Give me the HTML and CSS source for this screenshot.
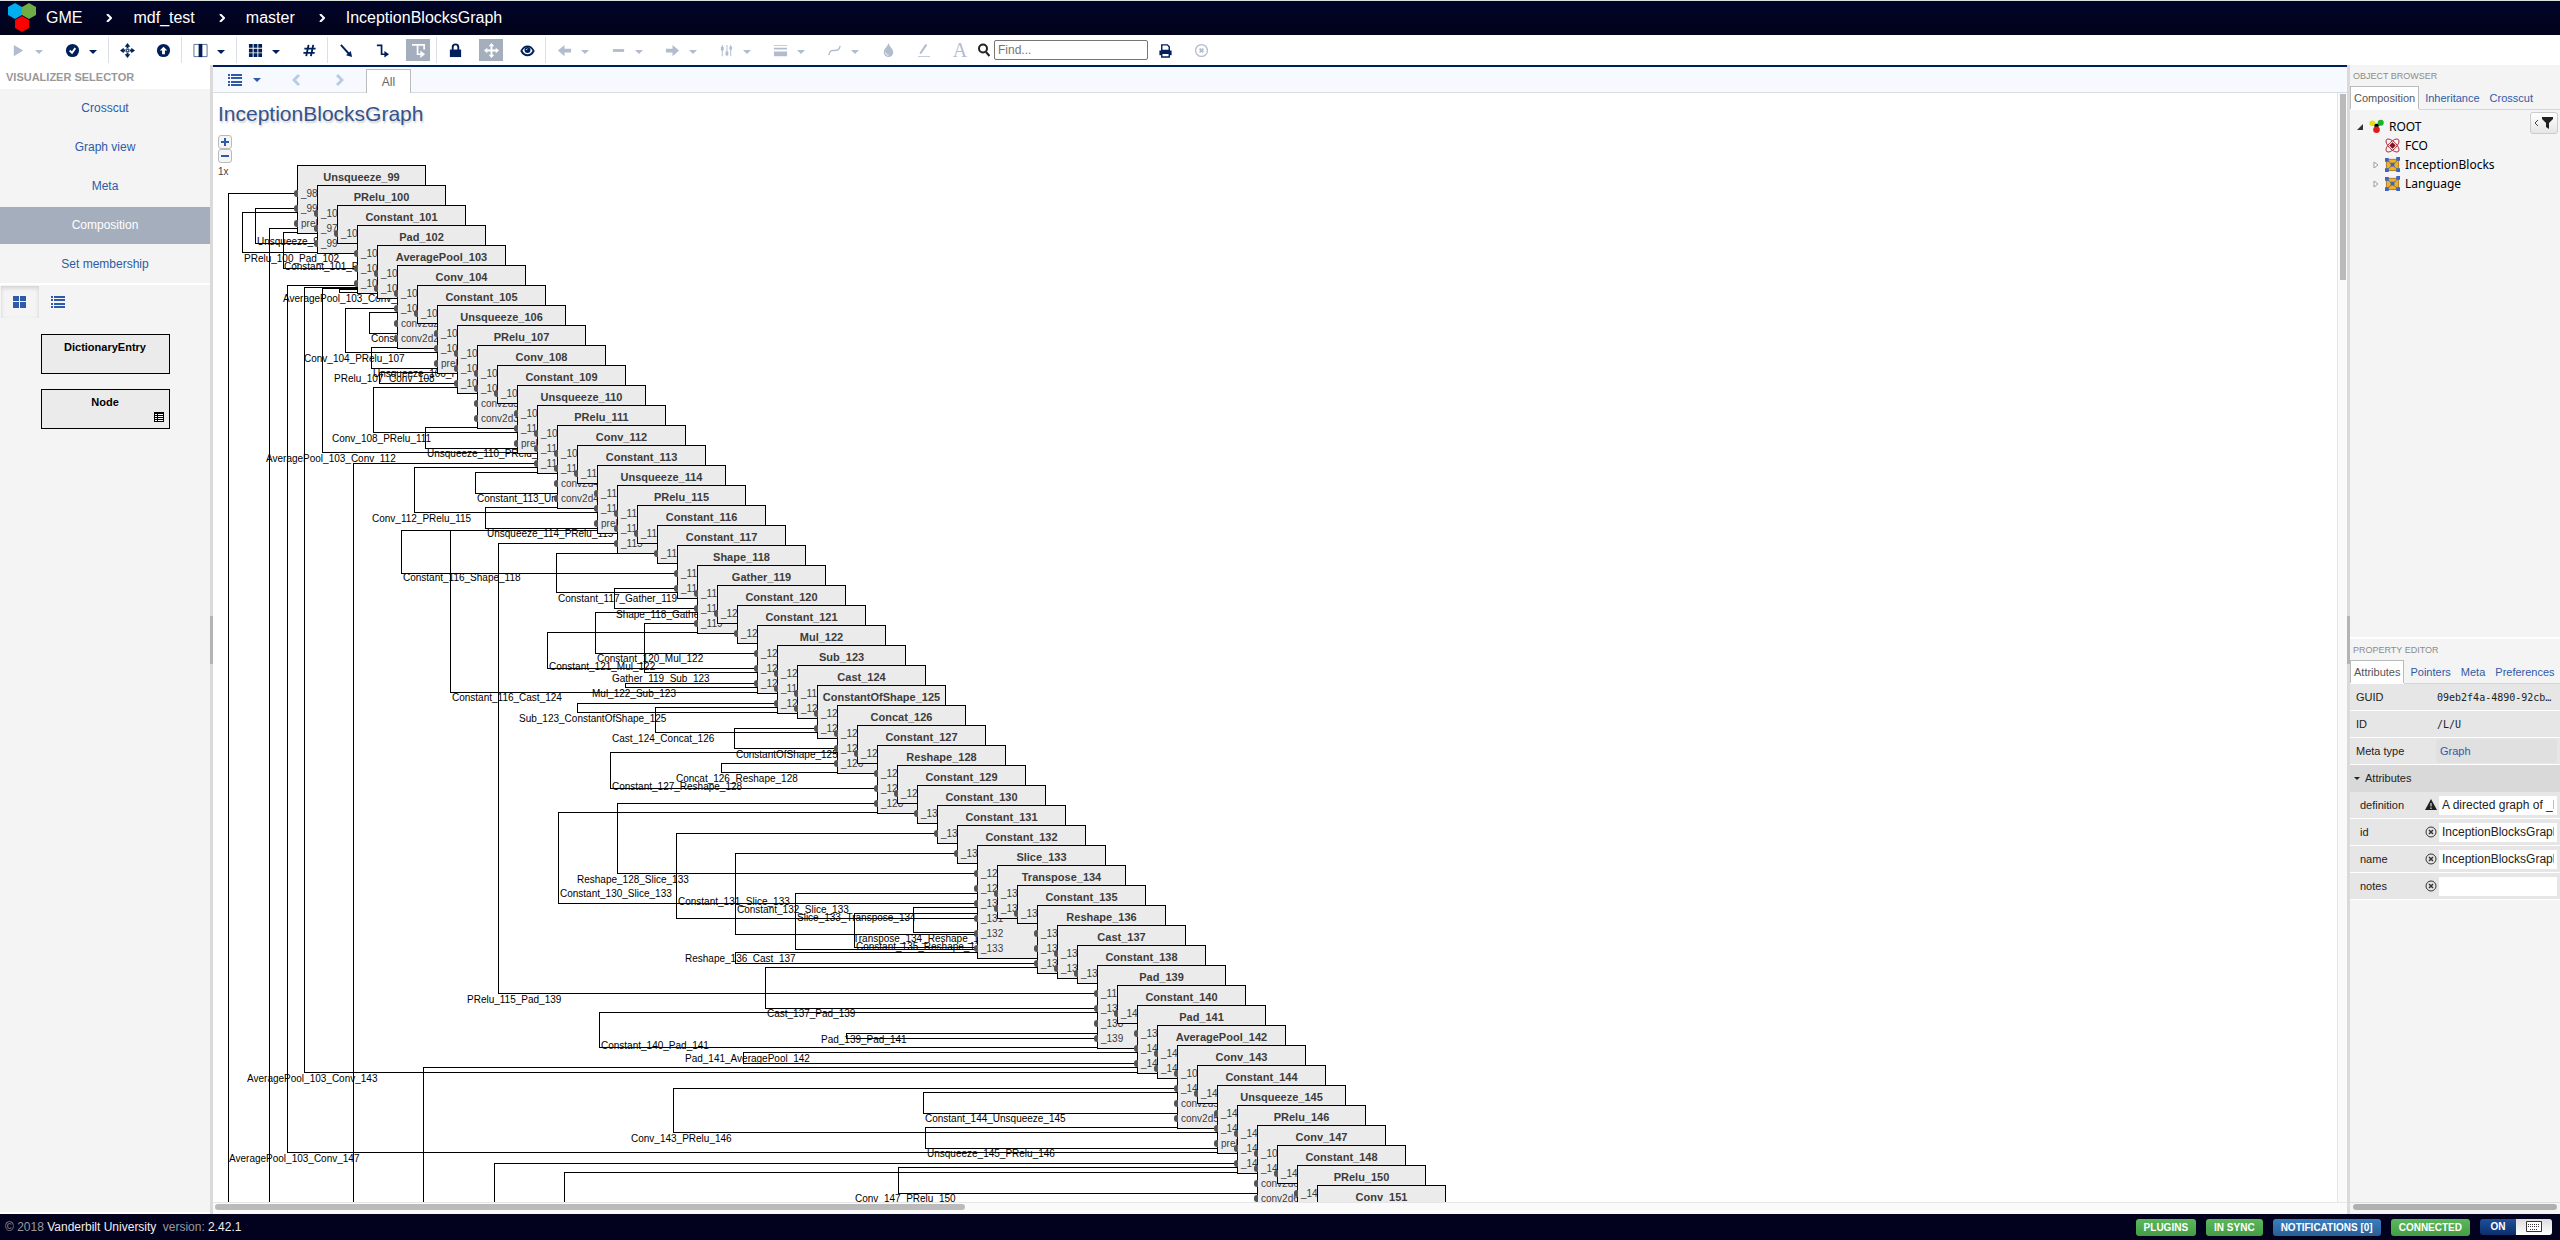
FILE: index.html
```html
<!DOCTYPE html>
<html lang="en">
<head>
<meta charset="utf-8">
<title>GME - InceptionBlocksGraph</title>
<link rel="stylesheet" href="styles.css">
</head>
<body>
<header class="topbar">
  <svg class="logo" width="30" height="30" viewBox="0 0 30 30" aria-hidden="true">
    <path fill="#00adef" d="M8 0l7 4v8l-7 4-7-4V4z"/>
    <path fill="#6fad46" d="M22 0l7 4v8l-7 4-7-4V4z"/>
    <path fill="#f00" d="M15 13l7 4v8l-7 4-7-4v-8z"/>
  </svg>
  <nav class="crumbs" aria-label="Breadcrumb">
    <a href="#">GME</a>
    <svg class="chev" viewBox="0 0 6 8"><path d="M1 0l4 4-4 4"/></svg>
    <a href="#">mdf_test</a>
    <svg class="chev" viewBox="0 0 6 8"><path d="M1 0l4 4-4 4"/></svg>
    <a href="#">master</a>
    <svg class="chev" viewBox="0 0 6 8"><path d="M1 0l4 4-4 4"/></svg>
    <a href="#">InceptionBlocksGraph</a>
  </nav>
</header>

<div class="toolbar" role="toolbar" aria-label="Tools">
  <div class="group">
    <div class="split off"><button class="tool" aria-label="Run"><svg viewBox="0 0 16 16"><path d="M3 2l10 6-10 6z"/></svg></button><button class="caret" aria-label="Run options"></button></div>
    <div class="split"><button class="tool" aria-label="Validate"><svg viewBox="0 0 16 16"><circle cx="8" cy="8" r="7"/><path fill="none" stroke="#fff" stroke-width="2" d="M5 8l2.500 2.500L11 5.500"/></svg></button><button class="caret" aria-label="Validate options"></button></div>
  </div>
  <div class="group">
    <button class="tool" aria-label="Center"><svg viewBox="0 0 16 16"><path fill-rule="evenodd" d="M8 0l3 4H9v2.500H7V4H5zM8 16l3-4H9V9.500H7V12H5zM0 8l4-3v2h2.500v2H4v2zM16 8l-4-3v2H9.500v2H12v2zM8 5.500L10.500 8 8 10.500 5.500 8zM8 7L7 8l1 1 1-1z"/></svg></button>
    <button class="tool" aria-label="Go to parent"><svg viewBox="0 0 16 16"><circle cx="8" cy="8" r="7"/><path fill="#fff" d="M8 4l4 4H9.500v4h-3V8H4z"/></svg></button>
  </div>
  <div class="group">
    <div class="split"><button class="tool" aria-label="Panels"><svg viewBox="0 0 16 16"><path fill="none" stroke="#5b6b96" d="M1 1.500h14v13H1z"/><path d="M6 1h4v14H6z"/></svg></button><button class="caret" aria-label="Panel options"></button></div>
  </div>
  <div class="group">
    <div class="split"><button class="tool" aria-label="Grid"><svg viewBox="0 0 16 16"><path d="M1 1h4v4H1zM6 1h4v4H6zM11 1h4v4h-4zM1 6h4v4H1zM6 6h4v4H6zM11 6h4v4h-4zM1 11h4v4H1zM6 11h4v4H6zM11 11h4v4h-4z"/></svg></button><button class="caret" aria-label="Grid options"></button></div>
    <button class="tool" aria-label="Snap to grid"><svg viewBox="0 0 16 16"><path fill="none" stroke="currentColor" stroke-width="2" d="M7 2L4.500 14M12 2L9.500 14M2.500 6h12M1.500 10.500h12"/></svg></button>
  </div>
  <div class="group">
    <button class="tool" aria-label="Straight connection"><svg viewBox="0 0 16 16"><path fill="none" stroke="currentColor" stroke-width="2" d="M2 2l9 10"/><path d="M14 15l-6.500-2 5-4.500z"/></svg></button>
    <button class="tool" aria-label="Elbow connection"><svg viewBox="0 0 16 16"><path fill="none" stroke="currentColor" stroke-width="1.800" d="M2 2.500h5V12h4"/><path d="M10 8.500l5 3.500-5 3.500z"/></svg></button>
    <button class="tool on" aria-label="Routed connection"><svg viewBox="0 0 16 16"><path fill="none" stroke="currentColor" stroke-width="1.800" d="M1 2h13v5M7 2v10h4"/><path d="M10 8l5 4-5 4z"/></svg></button>
  </div>
  <div class="group">
    <button class="tool" aria-label="Lock"><svg viewBox="0 0 16 16"><path fill="none" stroke="currentColor" stroke-width="2" d="M5 8V4.500a3 3 0 0 1 6 0V8"/><path d="M2 7h12v8H2z"/></svg></button>
    <button class="tool on" aria-label="Move"><svg viewBox="0 0 16 16"><path d="M8 0l3 3.500H9V7h3.500V5L16 8l-3.500 3V9H9v3.500h2L8 16l-3-3.500h2V9H3.500v2L0 8l3.500-3v2H7V3.500H5z"/></svg></button>
    <button class="tool" aria-label="Show"><svg viewBox="0 0 16 16"><path fill="none" stroke="currentColor" stroke-width="2" d="M1.500 8.500c3-6.500 10-6.500 13 0-3 6-10 6-13 0z"/><circle cx="8" cy="7.500" r="3.200"/><path stroke="#fff" fill="none" d="M6.500 7.500L8 6"/></svg></button>
  </div>
  <div class="group off">
    <div class="split"><button class="tool" aria-label="Line start"><svg viewBox="0 0 16 16"><path d="M1 8l7-6v4h7v4H8v4z"/></svg></button><button class="caret" aria-label="Line start options"></button></div>
    <div class="split"><button class="tool" aria-label="Line pattern"><svg viewBox="0 0 16 16"><path d="M2 6.500h12v3H2z"/></svg></button><button class="caret" aria-label="Line pattern options"></button></div>
    <div class="split"><button class="tool" aria-label="Line end"><svg viewBox="0 0 16 16"><path d="M15 8L8 2v4H1v4h7v4z"/></svg></button><button class="caret" aria-label="Line end options"></button></div>
    <div class="split"><button class="tool" aria-label="Line label"><svg viewBox="0 0 16 16"><path d="M3 2h1v12H3zM8 2h1v12H8zM12 2h1v12h-1zM2 4h3v4H2zM7 9h3v4H7zM11 4h3v3h-3z"/></svg></button><button class="caret" aria-label="Line label options"></button></div>
    <div class="split"><button class="tool" aria-label="Line width"><svg viewBox="0 0 16 16"><path d="M1 2h14v1H1zM1 5h14v2H1zM1 9h14v5H1z"/></svg></button><button class="caret" aria-label="Line width options"></button></div>
    <div class="split"><button class="tool" aria-label="Line curve"><svg viewBox="0 0 16 16"><path fill="none" stroke="currentColor" stroke-width="1.500" d="M2 13c1-6 3-5 6-5s5 0 6-5"/></svg></button><button class="caret" aria-label="Line curve options"></button></div>
    <button class="tool" aria-label="Fill color"><svg viewBox="0 0 16 16"><path d="M8 0c1 4 5 6 5 10a5 5 0 0 1-10 0c0-4 4-6 5-10z"/><path stroke="#fff" fill="none" d="M5 10c0 2 1 3 3 3"/></svg></button>
    <button class="tool" aria-label="Border color"><svg viewBox="0 0 16 16"><path d="M1 14h13v1H1zM9 1l2 1-6 9-2 1v-2z"/></svg></button>
    <button class="tool letter" aria-label="Text color">A</button>
  </div>
  <div class="find">
    <label for="find" aria-label="Find"><svg viewBox="0 0 12 14"><circle cx="5" cy="5.500" r="4" fill="none" stroke="#222" stroke-width="2"/><path stroke="#222" stroke-width="2" d="M8 9l3.500 4"/></svg></label>
    <input id="find" type="text" placeholder="Find...">
    <button class="tool" aria-label="Print"><svg viewBox="0 0 16 16"><path d="M1.500 8h13v5h-13z"/><path fill="#fff" stroke="currentColor" stroke-width="1.500" d="M4 8V2h6l2 2v4zM4 11h8v4H4z"/></svg></button>
    <button class="tool off" aria-label="Clear"><svg viewBox="0 0 16 16"><circle cx="8" cy="8" r="6.300" fill="none" stroke="currentColor" stroke-width="1.400"/><path stroke="currentColor" stroke-width="2" d="M6 6l4 4M10 6l-4 4"/></svg></button>
  </div>
</div>

<main class="work">
  <aside class="left">
    <h2 class="panel-title">VISUALIZER SELECTOR</h2>
    <ul class="views">
      <li><a href="#">Crosscut</a></li>
      <li><a href="#">Graph view</a></li>
      <li><a href="#">Meta</a></li>
      <li><a href="#" class="current">Composition</a></li>
      <li><a href="#">Set membership</a></li>
    </ul>
    <div class="parts">
      <div class="part-modes">
        <button class="pressed" aria-label="Tiles"><svg viewBox="0 0 14 14"><path d="M0 1h6v5H0zM7 1h6v5H7zM0 7h6v6H0zM7 7h6v6H7z"/></svg></button>
        <button aria-label="List"><svg viewBox="0 0 14 14"><path d="M0 1h2v2H0zM3 1h11v2H3zM0 4h2v2H0zM3 4h11v2H3zM0 8h2v2H0zM3 8h11v2H3zM0 11h2v2H0zM3 11h11v2H3z"/></svg></button>
      </div>
      <div class="part">DictionaryEntry</div>
      <div class="part">Node
        <svg class="part-mark" viewBox="0 0 10 10"><path d="M0 0h10v10H0z"/><path fill="#fff" d="M1 2h2v1H1zM4 2h5v1H4zM1 4h2v1H1zM4 4h5v1H4zM1 6h2v1H1zM4 6h5v1H4zM1 8h2v1H1zM4 8h5v1H4z"/></svg>
      </div>
    </div>
  </aside>
  <div class="splitter"><span></span></div>

  <section class="center">
    <div class="aspects">
      <button class="aspect-list" aria-label="Aspects"><svg viewBox="0 0 14 14"><path d="M0 1h2v2H0zM3 1h11v2H3zM0 4h2v2H0zM3 4h11v2H3zM0 8h2v2H0zM3 8h11v2H3zM0 11h2v2H0zM3 11h11v2H3z"/></svg><i class="down"></i></button>
      <button class="step" aria-label="Previous"><svg viewBox="0 0 8 12"><path d="M7 1L2 6l5 5"/></svg></button>
      <button class="step last" aria-label="Next"><svg viewBox="0 0 8 12"><path d="M1 1l5 5-5 5"/></svg></button>
      <button class="aspect">All</button>
    </div>
    <div class="stage">
      <div class="canvas" id="canvas">
        <h1>InceptionBlocksGraph</h1>
        <div class="zoom">
          <button aria-label="Zoom in"><svg viewBox="0 0 8 8"><path d="M3 0h2v3h3v2H5v3H3V5H0V3h3z"/></svg></button>
          <button aria-label="Zoom out"><svg viewBox="0 0 8 8"><path d="M0 3h8v2H0z"/></svg></button>
          <span>1x</span>
        </div>
        <svg class="wires" id="wires"></svg>
      </div>
      <div class="vbar"><span></span></div>
      <div class="hbar"><span></span></div>
    </div>
  </section>
  <div class="splitter"><span></span></div>

  <aside class="right">
    <section class="browser">
      <h2>OBJECT BROWSER</h2>
      <div class="tabs"><button class="active">Composition</button><button>Inheritance</button><button>Crosscut</button></div>
      <div class="tree-area">
        <ul class="tree">
          <li>
            <svg class="arrow" viewBox="0 0 8 8"><path d="M7 1v6H1z" fill="#333"/></svg>
            <svg class="ico" viewBox="0 0 16 16"><path stroke="#666" d="M4 5l4 6 4-6"/><circle cx="3.500" cy="4.500" r="3" fill="#e6dc10"/><circle cx="12.500" cy="4" r="3.200" fill="#19b526"/><circle cx="8" cy="11.500" r="3.500" fill="#e01818"/></svg>ROOT</li>
          <li class="child">
            <i class="arrow"></i>
            <svg class="ico" viewBox="0 0 16 16"><g fill="none" stroke="#b02a3a"><ellipse cx="8" cy="8" rx="9" ry="4" transform="rotate(45 8 8)"/><ellipse cx="8" cy="8" rx="9" ry="4" transform="rotate(-45 8 8)"/></g><path fill="#8a1020" d="M8 4.500L11.500 8 8 11.500 4.500 8z"/></svg>FCO</li>
          <li class="child">
            <svg class="arrow" viewBox="0 0 8 8"><path d="M2 1l4 3-4 3z" fill="#fff" stroke="#999"/></svg>
            <svg class="ico" viewBox="0 0 16 16"><path fill="#f0b020" stroke="#a87a20" d="M1.500 2.500h13v12h-13z"/><path stroke="#5a6fae" d="M2 3l12 11M14 3L2 14"/><path fill="#3f62c8" d="M0 1h4v4H0zM12 0h4v4h-4zM0 12h4v4H0zM12 12h4v4h-4zM6 6h4v4H6z"/></svg>InceptionBlocks</li>
          <li class="child">
            <svg class="arrow" viewBox="0 0 8 8"><path d="M2 1l4 3-4 3z" fill="#fff" stroke="#999"/></svg>
            <svg class="ico" viewBox="0 0 16 16"><path fill="#f0b020" stroke="#a87a20" d="M1.500 2.500h13v12h-13z"/><path stroke="#5a6fae" d="M2 3l12 11M14 3L2 14"/><path fill="#3f62c8" d="M0 1h4v4H0zM12 0h4v4h-4zM0 12h4v4H0zM12 12h4v4h-4zM6 6h4v4H6z"/></svg>Language</li>
        </ul>
        <button class="filter" aria-label="Filter"><svg viewBox="0 0 20 14"><path fill="none" stroke="#444" d="M4 4L1 7l3 3"/><path fill="#222" d="M8 1h11v2l-4 4v6l-3-2V7L8 3z"/></svg></button>
      </div>
    </section>
    <section class="props">
      <h2>PROPERTY EDITOR</h2>
      <div class="tabs"><button class="active">Attributes</button><button>Pointers</button><button>Meta</button><button>Preferences</button></div>
      <div class="row"><span>GUID</span><code>09eb2f4a-4890-92cb…</code></div>
      <div class="row"><span>ID</span><code>/L/U</code></div>
      <div class="row"><span>Meta type</span><a href="#">Graph</a></div>
      <div class="row head"><i class="down"></i><span>Attributes</span></div>
      <div class="row field"><label for="definition">definition</label><svg viewBox="0 0 12 12"><path d="M6 0l6 11H0z" fill="#222"/><path stroke="#fff" d="M6 4v3.500M6 8.500v1.500"/></svg><input id="definition" type="text" value="A directed graph of _Nodes"></div>
      <div class="row field"><label for="pid">id</label><svg viewBox="0 0 12 12"><circle cx="6" cy="6" r="5" fill="none" stroke="#333"/><path stroke="#333" stroke-width="1.500" d="M4 4l4 4M8 4L4 8"/></svg><input id="pid" type="text" value="InceptionBlocksGraph"></div>
      <div class="row field"><label for="pname">name</label><svg viewBox="0 0 12 12"><circle cx="6" cy="6" r="5" fill="none" stroke="#333"/><path stroke="#333" stroke-width="1.500" d="M4 4l4 4M8 4L4 8"/></svg><input id="pname" type="text" value="InceptionBlocksGraph"></div>
      <div class="row field"><label for="notes">notes</label><svg viewBox="0 0 12 12"><circle cx="6" cy="6" r="5" fill="none" stroke="#333"/><path stroke="#333" stroke-width="1.500" d="M4 4l4 4M8 4L4 8"/></svg><input id="notes" type="text" value=""></div>
      <div class="pbar"><span></span></div>
    </section>
  </aside>
</main>

<footer class="status">
  <p>© 2018 <a href="#">Vanderbilt University</a> <span>version:</span> <a href="#">2.42.1</a></p>
  <div class="badges">
    <button class="badge">PLUGINS</button>
    <button class="badge">IN SYNC</button>
    <button class="badge info">NOTIFICATIONS [0]</button>
    <button class="badge">CONNECTED</button>
    <button class="switch" aria-label="Keyboard shortcuts on"><b>ON</b><span><svg viewBox="0 0 16 11"><path fill="#fff" stroke="#333" d="M.5.5h15v10H.5z"/><path stroke="#333" stroke-dasharray="1 1" d="M2 3.500h12M2 5.500h12M4 8.500h8"/></svg></span></button>
  </div>
</footer>
<script src="diagram.js"></script>
</body>
</html>
```
FILE: styles.css
```css
* { box-sizing: border-box; }
body {
  margin: 0;
  height: 100vh;
  display: flex;
  flex-direction: column;
  overflow: hidden;
  background: #fff;
  color: #222;
  font-family: "Liberation Sans", Arial, sans-serif;
  font-size: 12px;
}
button { font: inherit; color: inherit; background: none; border: 0; padding: 0; }
a { color: inherit; text-decoration: none; }
h1, h2, p, ul { margin: 0; padding: 0; font-weight: normal; list-style: none; }
svg { display: block; fill: currentColor; }

/* Top bar */
.topbar {
  height: 35px;
  flex: none;
  display: flex;
  align-items: center;
  padding-left: 7px;
  gap: 9px;
  border-top: 1px solid #dde1dd;
  background: linear-gradient(#000428, #02021a);
  color: #fff;
}
.crumbs { display: flex; align-items: center; font-size: 16px; line-height: 20px; }
.crumbs .chev { width: 6px; height: 8px; margin: 0 21px 0 24px; fill: none; stroke: #fff; stroke-width: 2; }

/* Toolbar */
.toolbar { height: 30px; flex: none; display: flex; align-items: center; padding-left: 6px; color: #00205b; }
.group { display: flex; align-items: center; gap: 12px; height: 26px; }
.group + .group { border-left: 1px solid #dcdfe8; margin-left: 6px; padding-left: 6px; }
.split { display: flex; }
.tool { width: 24px; height: 22px; display: flex; align-items: center; justify-content: center; }
.tool svg { width: 15px; height: 15px; }
.tool.on { background: #a5aebd; color: #fff; }
.off { color: #b1bccf; }
.letter { font-family: "Liberation Serif", serif; font-size: 20px; }
.caret { width: 18px; display: flex; align-items: center; justify-content: center; }
.caret::after, .down { content: ""; width: 0; height: 0; border: 4px solid transparent; border-top-color: currentColor; border-bottom: 0; }
.caret::after { margin-top: 4px; }
.find { display: flex; align-items: center; padding-left: 6px; }
.find label svg { width: 12px; height: 14px; }
.find input { width: 154px; height: 20px; margin: 0 5px 0 4px; padding: 0 3px; border: 1px solid #767676; border-radius: 2px; font: 12px "Liberation Sans", Arial, sans-serif; }
.find input::placeholder { color: #757575; }
.find .off { margin-left: 12px; }

/* Work area */
.work { flex: 1; min-height: 0; display: flex; }
.splitter { width: 3px; flex: none; background: #dadada; display: flex; align-items: center; }
.splitter span { width: 3px; height: 48px; background: #b4b4b4; }

.left { width: 210px; flex: none; display: flex; flex-direction: column; }
.panel-title { height: 24px; padding-left: 6px; font-size: 11px; font-weight: bold; line-height: 24px; color: #999; }
.views { background: #f4f4f4; display: grid; gap: 2px; padding-top: 1px; color: #2f5aa8; }
.views a { display: block; line-height: 37px; text-align: center; }
.views .current { background: #a5aebd; color: #fff; }
.parts { flex: 1; margin: 2px 0; background: #f4f4f4; display: flex; flex-direction: column; align-items: center; gap: 15px; }
.part-modes { align-self: stretch; display: flex; padding: 1px; color: #2f5aa8; }
.part-modes button { width: 38px; height: 32px; display: flex; align-items: center; justify-content: center; }
.part-modes svg { width: 14px; height: 14px; }
.part-modes .pressed { box-shadow: inset 0 2px 4px #00000026; }
.part { position: relative; width: 129px; height: 40px; border: 1px solid #000; background: #ebebeb; color: #000; font-size: 11px; font-weight: bold; line-height: 24px; text-align: center; }
.part-mark { position: absolute; right: 5px; bottom: 6px; width: 10px; height: 10px; }

.center { flex: 1; min-width: 0; display: flex; flex-direction: column; border-top: 2px solid #00205b; }
.aspects { height: 26px; flex: none; display: flex; align-items: flex-end; padding-left: 15px; background: #f6faff; border-bottom: 1px solid #d9dce0; color: #2f5aa8; }
.aspects button { height: 24px; display: flex; align-items: center; }
.aspect-list { gap: 11px; width: 60px; }
.aspect-list svg { width: 14px; height: 14px; }
.step { width: 44px; padding-left: 4px; }
.step.last { width: 34px; }
.step svg { width: 8px; height: 12px; fill: none; stroke: #b9cbe8; stroke-width: 3; }
.aspects .aspect { width: 45px; justify-content: center; margin-bottom: -1px; background: #fff; border: 1px solid #bbb; border-bottom: 0; color: #666; }

.stage { flex: 1; min-height: 0; display: grid; grid-template: 1fr 12px / 1fr 10px; }
.canvas { position: relative; overflow: hidden; padding: 8px 0 0 5px; background: #fff; }
.canvas h1 { font-size: 21px; line-height: 25px; color: #34538c; text-shadow: 1px 2px 2px #ccc; }
.zoom { display: flex; flex-direction: column; width: 14px; margin-top: 9px; font-size: 10px; color: #444; }
.zoom button { width: 14px; height: 14px; display: flex; align-items: center; justify-content: center; border: 1px solid #bbb; border-radius: 3px; background: #f5f5f5; color: #2f5aa8; }
.zoom svg { width: 8px; height: 8px; }
.zoom span { line-height: 18px; }
.wires { position: absolute; left: 0; top: 0; width: 100%; height: 100%; font-size: 10px; fill: #000; }
.wires path { fill: none; stroke: #000; shape-rendering: crispEdges; }
.node { position: absolute; width: 129px; padding-bottom: 2px; border: 1px solid #000; background: #ebebeb; color: #3c3c3c; }
.node h3 { margin: 0; font-size: 11px; line-height: 22px; text-align: center; white-space: nowrap; }
.node ul { font-size: 10px; line-height: 15px; margin-top: -2px; }
.node li { position: relative; padding-left: 3px; }
.node li::before { content: ""; position: absolute; left: -4px; top: 4px; width: 4px; height: 7px; border-radius: 3px 0 0 3px; background: #555; }
.vbar { border-left: 1px solid #e6e6e6; background: #fafafa; display: flex; justify-content: center; }
.vbar span { width: 6px; height: 186px; margin-top: 1px; background: #bababa; }
.hbar { grid-column: 1 / -1; border-top: 1px solid #e6e6e6; background: #fafafa; padding: 1px 2px; }
.hbar span { display: block; width: 750px; height: 6px; border-radius: 3px; background: #bababa; }

/* Right side */
.right { width: 210px; flex: none; display: flex; flex-direction: column; background: #f4f4f4; font-size: 11px; }
.right h2 { height: 21px; padding-left: 3px; font-size: 9px; line-height: 22px; color: #8c8c8c; }
.tabs { display: flex; gap: 2px; border-bottom: 1px solid #d5d5d5; color: #2f5aa8; }
.tabs button { height: 23px; padding: 0 3px; border: 1px solid transparent; border-bottom: 0; }
.tabs .active { background: #fff; border-color: #bbb; color: #555; box-shadow: 0 1px #fff; }
.browser { height: 572px; flex: none; }
.tree-area { display: flex; justify-content: space-between; align-items: flex-start; padding: 2px 2px 0 6px; }
.tree { padding-top: 5px; font: 12px/19px "Noto Sans", sans-serif; color: #000; white-space: nowrap; }
.tree li { display: flex; align-items: center; }
.tree .child { padding-left: 16px; }
.tree .arrow { width: 8px; height: 8px; margin-right: 5px; }
.tree .ico { width: 15px; height: 15px; margin-right: 5px; }
.filter { width: 28px; height: 22px; padding: 3px; border: 1px solid #ccc; border-radius: 3px; background: linear-gradient(#fff, #e6e6e6); }
.props { flex: 1; display: flex; flex-direction: column; border-top: 2px solid #fff; }
.row { height: 27px; display: flex; align-items: center; padding: 0 3px 0 6px; background: #e6e6e6; border-bottom: 1px solid #fff; color: #222; }
.row > span { width: 80px; }
.row code { font: 10px "DejaVu Sans Mono", monospace; padding-left: 1px; white-space: nowrap; }
.row a { flex: 1; height: 24px; padding-left: 4px; border-radius: 4px; background: #e0e0e0; line-height: 24px; color: #2f5aa8; }
.head { gap: 5px; padding-left: 4px; background: #d9d9d9; border-color: #d9d9d9; }
.head .down { border-width: 3px 3px 0; }
.field { padding-left: 10px; }
.field label { flex: 1; }
.field svg { width: 12px; height: 12px; margin-right: 2px; }
.field input { width: 118px; height: 19px; padding: 0 3px; border: 0; background: #fff; color: #222; font: 12px "Liberation Sans", Arial, sans-serif; }
.pbar { margin-top: auto; height: 12px; border-top: 1px solid #ddd; padding: 1px 3px; }
.pbar span { display: block; height: 6px; border-radius: 3px; background: #b0b0b0; }

/* Status bar */
.status { height: 26px; flex: none; display: flex; align-items: center; justify-content: space-between; padding: 0 8px 0 5px; background: #02021f; color: #999; }
.status p span { margin-left: 3px; }
.status a { color: #eee; }
.badges { display: flex; gap: 10px; }
.badge { height: 17px; padding: 0 8px; border-radius: 3px; background: linear-gradient(#5cb85c, #449d44); color: #fff; font-size: 10px; font-weight: bold; }
.info { background: linear-gradient(#3a7fc0, #285f95); }
.switch { width: 72px; height: 16px; display: flex; overflow: hidden; border-radius: 3px; background: linear-gradient(#1f4f9a, #0c2f6b); color: #fff; font-size: 10px; line-height: 16px; }
.switch b, .switch span { flex: 1; height: 16px; }
.switch span { display: flex; align-items: center; justify-content: center; background: linear-gradient(#ddd, #fff); }
.switch svg { width: 16px; height: 11px; }
```
FILE: diagram.js
```js
// Each node is "name|port port ..."; nodes cascade down and to the right.
const nodes = `Unsqueeze_99|_98 _99 prelu_1
PRelu_100|_100 _97 _99
Constant_101|_101
Pad_102|_100 _101 _102
AveragePool_103|_102 _103
Conv_104|_103 _104 conv2d2_b conv2d2_w
Constant_105|_105
Unsqueeze_106|_105 _106 prelu_2
PRelu_107|_104 _106 _107
Conv_108|_107 _108 conv2d3_b conv2d3_w
Constant_109|_109
Unsqueeze_110|_109 _110 prelu_3
PRelu_111|_108 _110 _111
Conv_112|_103 _112 conv2d4_b conv2d4_w
Constant_113|_113
Unsqueeze_114|_113 _114 prelu_4
PRelu_115|_112 _114 _115
Constant_116|_116
Constant_117|_117
Shape_118|_116 _118
Gather_119|_117 _118 _119
Constant_120|_120
Constant_121|_121
Mul_122|_120 _121 _122
Sub_123|_122 _119 _123
Cast_124|_116 _124
ConstantOfShape_125|_123 _125
Concat_126|_124 _125 _126
Constant_127|_127
Reshape_128|_126 _127 _128
Constant_129|_129
Constant_130|_130
Constant_131|_131
Constant_132|_132
Slice_133|_128 _129 _130 _131 _132 _133
Transpose_134|_133 _134
Constant_135|_135
Reshape_136|_134 _135 _136
Cast_137|_136 _137
Constant_138|_138
Pad_139|_115 _137 _138 _139
Constant_140|_140
Pad_141|_139 _140 _141
AveragePool_142|_141 _142
Conv_143|_103 _143 conv2d5_b conv2d5_w
Constant_144|_144
Unsqueeze_145|_144 _145 prelu_5
PRelu_146|_143 _145 _146
Conv_147|_103 _147 conv2d6_b conv2d6_w
Constant_148|_148
PRelu_150|_147 _149 _150
Conv_151|_150 _151`.split("\n");

// Connections: leftmost x, upper y, lower y, then label, label x, label y.
const wires = [
  [228, 193, 1300], [269, 228, 1300], [353, 463, 1300],
  [423, 1067, 1300], [494, 1163, 1300], [564, 1172, 1300],
  [255, 208, 243, "Unsqueeze_99_PRelu_100", 257, 242],
  [242, 212, 252, "PRelu_100_Pad_102", 244, 259],
  [283, 232, 268, "Constant_101_Pad_102", 284, 267],
  [287, 285, 1152, "AveragePool_103_Conv_147", 229, 1159],
  [304, 287, 1072, "AveragePool_103_Conv_143", 247, 1079],
  [322, 288, 452, "AveragePool_103_Conv_112", 266, 459],
  [339, 289, 292, "AveragePool_103_Conv_104", 283, 299],
  [345, 308, 352, "Conv_104_PRelu_107", 304, 359],
  [369, 312, 333, "Constant_105_Unsqueeze_106", 371, 339],
  [371, 347, 368, "Unsqueeze_106_PRelu_107", 373, 374],
  [379, 372, 383, "PRelu_107_Conv_108", 334, 379],
  [373, 387, 432, "Conv_108_PRelu_111", 332, 439],
  [425, 427, 448, "Unsqueeze_110_PRelu_111", 427, 454],
  [414, 467, 512, "Conv_112_PRelu_115", 372, 519],
  [475, 472, 493, "Constant_113_Unsqueeze_114", 477, 499],
  [485, 507, 528, "Unsqueeze_114_PRelu_115", 487, 534],
  [401, 530, 573, "Constant_116_Shape_118", 403, 578],
  [450, 530, 692, "Constant_116_Cast_124", 452, 698],
  [498, 543, 993, "PRelu_115_Pad_139", 467, 1000],
  [556, 553, 592, "Constant_117_Gather_119", 558, 599],
  [614, 588, 608, "Shape_118_Gather_119", 616, 615],
  [595, 612, 653, "Constant_120_Mul_122", 597, 659],
  [644, 623, 672, "Gather_119_Sub_123", 612, 679],
  [547, 632, 668, "Constant_121_Mul_122", 549, 667],
  [625, 683, 687, "Mul_122_Sub_123", 592, 694],
  [577, 703, 712, "Sub_123_ConstantOfShape_125", 519, 719],
  [655, 707, 732, "Cast_124_Concat_126", 612, 739],
  [734, 728, 748, "ConstantOfShape_125_Concat_126", 736, 755],
  [610, 752, 788, "Constant_127_Reshape_128", 612, 787],
  [721, 763, 772, "Concat_126_Reshape_128", 676, 779],
  [617, 803, 873, "Reshape_128_Slice_133", 577, 880],
  [558, 812, 903, "Constant_130_Slice_133", 560, 894],
  [676, 833, 918, "Constant_131_Slice_133", 678, 902],
  [735, 853, 934, "Constant_132_Slice_133", 737, 910],
  [795, 893, 949, "Slice_133_Transpose_134", 797, 918],
  [913, 907, 932, "Transpose_134_Reshape_136", 853, 939],
  [854, 913, 947, "Constant_135_Reshape_136", 856, 947],
  [735, 952, 963, "Reshape_136_Cast_137", 685, 959],
  [765, 967, 1008, "Cast_137_Pad_139", 767, 1014],
  [599, 1012, 1047, "Constant_140_Pad_141", 601, 1046],
  [846, 1033, 1038, "Pad_139_Pad_141", 821, 1040],
  [743, 1052, 1063, "Pad_141_AveragePool_142", 685, 1059],
  [673, 1088, 1132, "Conv_143_PRelu_146", 631, 1139],
  [923, 1092, 1113, "Constant_144_Unsqueeze_145", 925, 1119],
  [925, 1127, 1148, "Unsqueeze_145_PRelu_146", 927, 1154],
  [898, 1167, 1193, "Conv_147_PRelu_150", 855, 1199]
];

const view = { x: 213, y: 93 };
const first = { x: 297, y: 165 };
const step = 20;

// A wire runs right until it is under the node whose top edge is just above it.
const edge = y => first.x + step * Math.floor((y - first.y) / step) + 2;

document.getElementById("wires").innerHTML = wires.map(([x, top, bottom, text, tx, ty]) => {
  const left = x - view.x + 0.5;
  const y1 = top - view.y + 0.5;
  const y2 = bottom - view.y + 0.5;
  const path = `<path d="M${edge(top) - view.x} ${y1}H${left}V${y2}H${edge(bottom) - view.x}"/>`;
  return path + (text ? `<text x="${tx - view.x}" y="${ty - view.y + 3}">${text}</text>` : "");
}).join("");

document.getElementById("canvas").insertAdjacentHTML("beforeend", nodes.map((line, i) => {
  const [name, ports] = line.split("|");
  const left = first.x - view.x + i * step;
  const top = first.y - view.y + i * step;
  const items = ports.split(" ").map(p => `<li>${p}</li>`).join("");
  return `<article class="node" style="left:${left}px;top:${top}px"><h3>${name}</h3><ul>${items}</ul></article>`;
}).join(""));
```
